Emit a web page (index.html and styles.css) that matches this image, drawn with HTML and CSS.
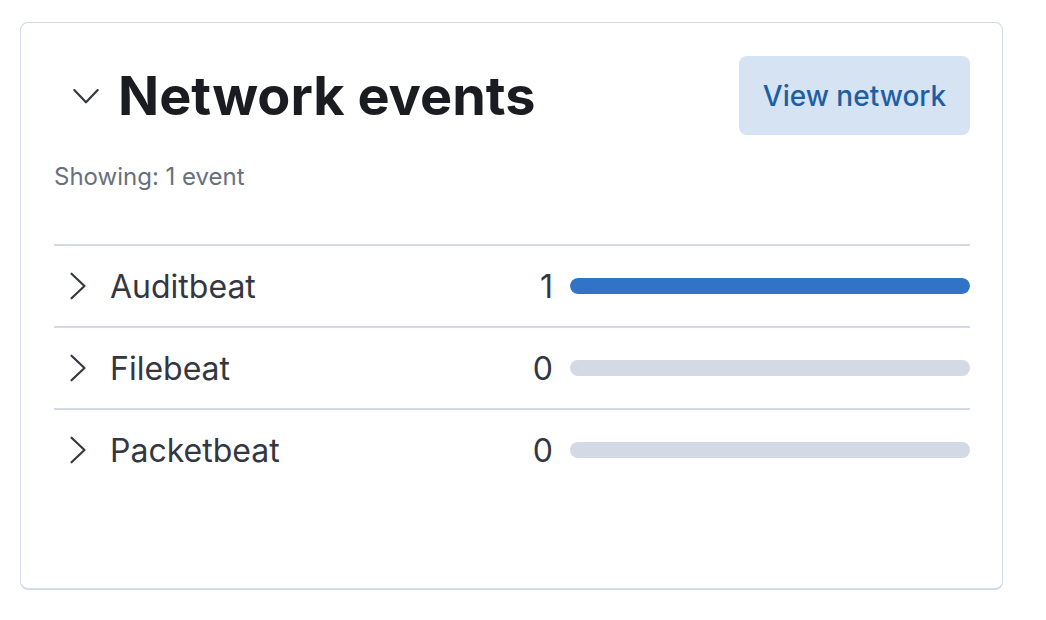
FILE: index.html
```html
<!DOCTYPE html>
<html>
<head>
<meta charset="utf-8">
<link rel="stylesheet" href="styles.css">
</head>
<body>
<div class="card">
  <div class="header">
    <div class="title-wrap">
      <svg class="chev-down" width="28" height="28" viewBox="0 0 16 16"><path d="M1.3 4.6 L8 11.6 L14.7 4.6" fill="none" stroke="#343741" stroke-width="1.25" stroke-linecap="round" stroke-linejoin="round"/></svg>
      <h2 class="title">Network events</h2>
    </div>
    <button class="btn">View network</button>
  </div>
  <div class="showing">Showing: 1 event</div>
  <div class="list">
    <div class="row">
      <svg class="chev-right" width="28" height="28" viewBox="0 0 16 16"><path d="M4.3 1 L11.7 8 L4.3 15" fill="none" stroke="#343741" stroke-width="1.25" stroke-linecap="round" stroke-linejoin="round"/></svg>
      <span class="name">Auditbeat</span>
      <span class="count">1</span>
      <div class="bar"><div class="fill" style="width:100%"></div></div>
    </div>
    <div class="row">
      <svg class="chev-right" width="28" height="28" viewBox="0 0 16 16"><path d="M4.3 1 L11.7 8 L4.3 15" fill="none" stroke="#343741" stroke-width="1.25" stroke-linecap="round" stroke-linejoin="round"/></svg>
      <span class="name">Filebeat</span>
      <span class="count">0</span>
      <div class="bar"><div class="fill" style="width:0%"></div></div>
    </div>
    <div class="row">
      <svg class="chev-right" width="28" height="28" viewBox="0 0 16 16"><path d="M4.3 1 L11.7 8 L4.3 15" fill="none" stroke="#343741" stroke-width="1.25" stroke-linecap="round" stroke-linejoin="round"/></svg>
      <span class="name">Packetbeat</span>
      <span class="count">0</span>
      <div class="bar"><div class="fill" style="width:0%"></div></div>
    </div>
  </div>
</div>
</body>
</html>
```
FILE: styles.css
```css
html, body { margin: 0; padding: 0; background: #fff; }
body {
  font-family: Inter, "Noto Sans", sans-serif;
  color: #343741;
  padding: 22px 0 0 20px;
}
.card {
  box-sizing: border-box;
  width: 983px;
  height: 568px;
  border: 1px solid #d3dae6;
  border-bottom-width: 2px;
  border-radius: 8px;
  padding: 33px 32px 32px 33px;
}
.header {
  display: flex;
  justify-content: space-between;
  align-items: flex-start;
}
.title-wrap {
  display: flex;
  align-items: center;
  gap: 18px;
  padding-top: 8px;
  padding-left: 18px;
}
.chev-down { display: block; }
.title {
  margin: 0;
  font-size: 54px;
  font-weight: 700;
  color: #1a1c21;
  line-height: 64px;
}
.btn {
  border: 0;
  background: #d6e3f3;
  color: #1d5fa5;
  font-family: Inter, sans-serif;
  font-size: 28px;
  font-weight: 500;
  width: 231px;
  height: 79px;
  border-radius: 8px;
  padding: 0;
}
.showing {
  margin-top: 26px;
  font-size: 24px;
  color: #69707d;
  line-height: 32px;
}
.list {
  margin-top: 51px;
  border-top: 2px solid #d3dae6;
}
.row {
  display: flex;
  align-items: center;
  height: 80px;
  border-bottom: 2px solid #d3dae6;
}
.row:last-child { border-bottom: 0; }
.chev-right { display: block; margin-left: 10px; }
.name {
  margin-left: 18px;
  font-size: 32px;
  flex: 1;
}
.count {
  font-size: 32px;
  margin-right: 17px;
}
.bar {
  width: 400px;
  height: 16px;
  border-radius: 8px;
  background: #d3dae6;
  overflow: hidden;
}
.fill {
  height: 100%;
  background: #3173c6;
  border-radius: 8px;
}
```
